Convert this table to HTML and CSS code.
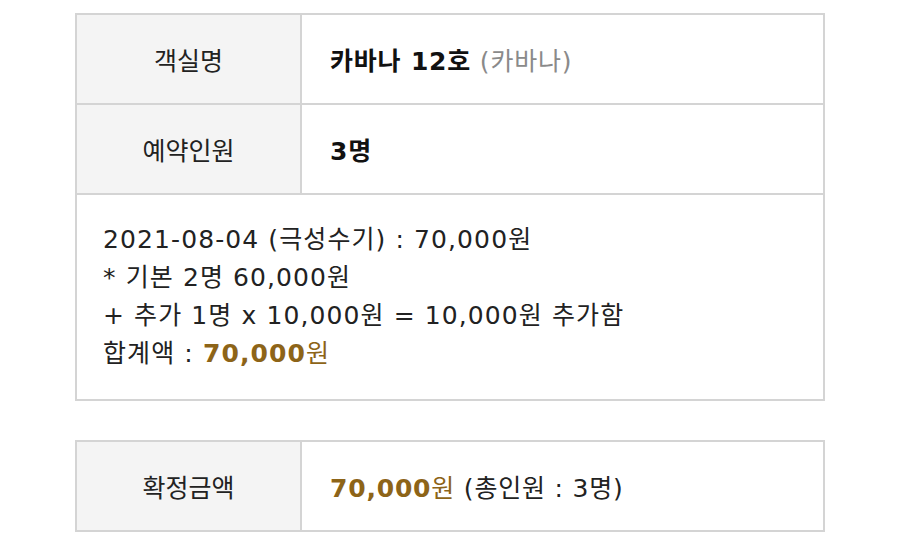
FILE: index.html
```html
<!DOCTYPE html>
<html lang="ko">
<head>
    <meta charset="UTF-8">
    <meta name="viewport" content="width=device-width, initial-scale=1.0">
    <title>예약 확인</title>
    <link rel="stylesheet" href="styles.css">
</head>
<body>
    <div class="wrap">
        <!-- 객실 / 인원 -->
        <div class="box">
            <div class="row">
                <div class="label">객실명</div>
                <div class="value"><strong>카바나 12호</strong>&nbsp;<span class="sub">(카바나)</span></div>
            </div>
            <div class="row">
                <div class="label">예약인원</div>
                <div class="value"><strong>3명</strong></div>
            </div>
            <div class="detail">
                <p>2021-08-04 (극성수기) : 70,000원</p>
                <p>* 기본 2명 60,000원</p>
                <p>+ 추가 1명 x 10,000원 = 10,000원 추가함</p>
                <p>합계액 : <span class="price"><b>70,000</b>원</span></p>
            </div>
        </div>

        <!-- 확정금액 -->
        <div class="box total">
            <div class="row">
                <div class="label">확정금액</div>
                <div class="value"><span class="price"><b>70,000</b>원</span> (총인원 : 3명)</div>
            </div>
        </div>
    </div>
</body>
</html>
```

FILE: styles.css
```css
body {
    margin: 0;
    background: #fff;
    color: #222;
    font-family: "DejaVu Sans", "Noto Sans CJK KR", sans-serif;
    font-size: 25px;
}
.wrap {
    width: 750px;
    margin: 0 auto;
    padding-top: 13px;
}
.box {
    border: 2px solid #d4d4d4;
    box-sizing: border-box;
}
.box.total {
    margin-top: 39px;
}
.row {
    display: grid;
    grid-template-columns: 225px 1fr;
    height: 88px;
}
.row + .row, .row + .detail {
    border-top: 2px solid #d4d4d4;
}
.label {
    display: flex;
    align-items: center;
    justify-content: center;
    background: #f4f4f4;
    border-right: 2px solid #d4d4d4;
}
.value {
    display: flex;
    align-items: center;
    padding-left: 28px;
    color: #222;
    white-space: pre;
    letter-spacing: 0.8px;
}
.value strong {
    color: #111;
    font-weight: 700;
}
.sub {
    color: #8a8a8a;
}
.detail {
    padding: 26px 26px;
    letter-spacing: 1.1px;
}
.detail p {
    margin: 0;
    line-height: 38px;
}
.price {
    color: #8d6418;
}
.price b {
    font-weight: 700;
}
```
